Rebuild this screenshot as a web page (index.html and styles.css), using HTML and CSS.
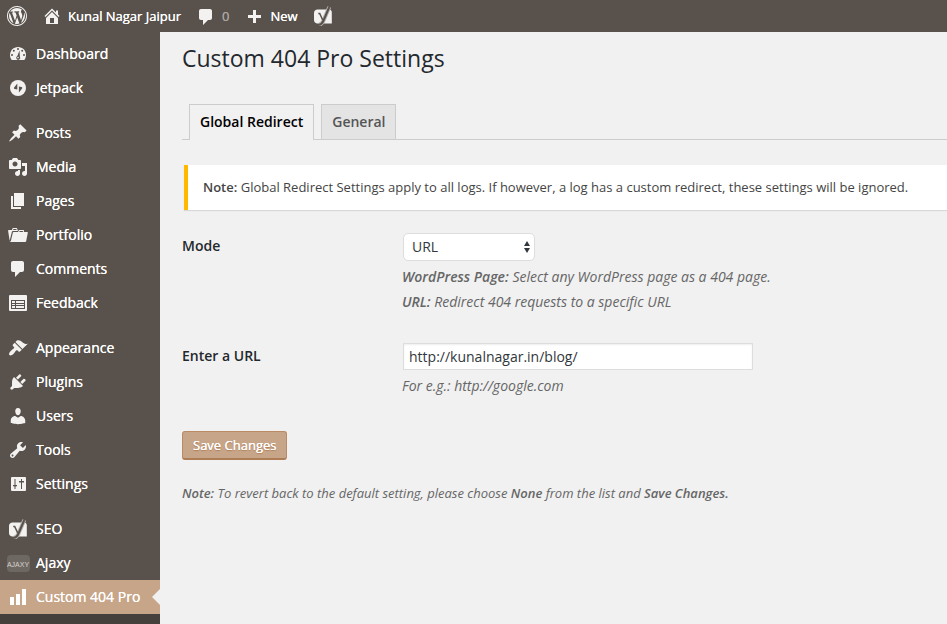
FILE: index.html
```html
<!DOCTYPE html>
<html lang="en">
<head>
<meta charset="utf-8">
<title>Custom 404 Pro Settings</title>
<link rel="stylesheet" href="styles.css">
</head>
<body>
<svg class="sprite" aria-hidden="true">
  <symbol id="comment" viewBox="0 0 20 20"><path d="M5 2h9c1.1 0 2 .9 2 2v7c0 1.1-.9 2-2 2h-2l-5 5v-5H5c-1.1 0-2-.9-2-2V4c0-1.1.9-2 2-2z"/></symbol>
  <symbol id="yoast" viewBox="0 0 20 20">
    <path d="M4.500 3.500H16c1.700 0 2.800 1.200 2.800 3v11H4.500C2.500 17.500 1 16 1 14V7C1 5 2.500 3.500 4.500 3.500z"/>
    <path class="rim" d="M16.300 1L10.300 15c-1 2.300-2 3.500-4.300 3.800" fill="none" stroke-width="4"/>
    <path class="cut" d="M16.300 1L10.300 15c-1 2.300-2 3.500-4.300 3.800" fill="none" stroke-width="2"/>
    <path class="cut" d="M5.300 7.500h1.400l3 6.500" fill="none" stroke-width="1.500"/>
  </symbol>
</svg>

<header class="adminbar">
  <a class="bar-item bar-logo" href="#" aria-label="About WordPress"><svg class="icon" viewBox="0 0 20 20"><path d="M20 10c0-5.520-4.480-10-10-10S0 4.480 0 10s4.480 10 10 10 10-4.480 10-10zM10 1.010c4.970 0 8.990 4.020 8.990 8.990s-4.020 8.990-8.990 8.990S1.010 14.970 1.010 10 5.030 1.010 10 1.010zM8.010 14.820L4.960 6.610c.490-.030 1.050-.080 1.050-.080.430-.050.380-1.010-.060-.990 0 0-1.290.100-2.130.100-.150 0-.330 0-.520-.010 1.440-2.170 3.900-3.600 6.700-3.600 2.090 0 3.990.790 5.410 2.090-.600-.080-1.450.350-1.450 1.420 0 .660.380 1.220.790 1.880.310.540.500 1.220.500 2.210 0 1.340-1.270 4.480-1.270 4.480l-2.710-7.500c.480-.030.750-.160.750-.160.430-.050.380-1.100-.050-1.080 0 0-1.300.110-2.140.110-.780 0-2.110-.110-2.110-.110-.430-.020-.480 1.060-.050 1.080l.840.080 1.120 3.040zm6.020 2.150L16.640 10s.670-1.690.390-3.810c.630 1.140.940 2.420.940 3.810 0 2.960-1.560 5.580-3.940 6.970zM2.680 6.770L6.500 17.250c-2.670-1.300-4.470-4.080-4.470-7.250 0-1.160.200-2.230.650-3.230zm7.450 4.530l2.290 6.250c-.750.270-1.570.420-2.420.420-.720 0-1.410-.110-2.060-.300z"/></svg></a>
  <a class="bar-item" href="#"><svg class="icon" viewBox="0 0 20 20" aria-hidden="true"><path d="M16 8.500l1.530 1.530-1.060 1.060L10 4.600l-6.470 6.490-1.060-1.060L10 2.500l4 4v-2h2v4zm-6-2.460l6 5.990V18H4v-5.970zM12 17v-5H8v5h4z"/></svg><span>Kunal Nagar Jaipur</span></a>
  <a class="bar-item bar-comments" href="#"><svg class="icon" aria-hidden="true"><use href="#comment"/></svg><span>0</span></a>
  <a class="bar-item bar-new" href="#"><svg class="icon" viewBox="0 0 20 20" aria-hidden="true"><path d="M17 7v3h-5v5H9v-5H4V7h5V2h3v5h5z"/></svg><span>New</span></a>
  <a class="bar-item" href="#" aria-label="SEO"><svg class="icon"><use href="#yoast"/></svg></a>
</header>

<div class="layout">
  <nav class="sidebar" aria-label="Main menu">
    <ul class="menu">
      <li><a href="#"><svg class="icon" viewBox="0 0 20 20"><path d="M3.760 16h12.480C17.340 14.640 18 12.900 18 11c0-4.420-3.580-8-8-8s-8 3.580-8 8c0 1.900.660 3.640 1.760 5z"/><g class="hole"><circle cx="10" cy="5" r="1"/><circle cx="5.800" cy="6.800" r="1"/><circle cx="14.200" cy="6.800" r="1"/><circle cx="4" cy="11" r="1"/><circle cx="16" cy="11" r="1"/><path d="M11.500 6.500l.400 6.200a2 2 0 1 1-2.600-.700z"/></g><circle cx="10" cy="13.600" r=".8"/></svg>Dashboard</a></li>
      <li><a href="#"><svg class="icon" viewBox="0 0 20 20"><circle cx="10" cy="10" r="8"/><path class="hole" d="M9.300 5.500v6l-2.600-.600c-.800-.200-1-.800-.600-1.400zM10.900 14.500v-6l2.600.600c.800.200 1 .800.600 1.400z"/></svg>Jetpack</a></li>
    </ul>
    <ul class="menu">
      <li><a href="#"><svg class="icon" viewBox="0 0 20 20"><path d="M10.440 3.020l1.820-1.820 6.360 6.350-1.830 1.820c-1.050-.680-2.480-.570-3.410.360l-.750.750c-.920.930-1.040 2.350-.350 3.410l-1.830 1.820-2.410-2.410-2.800 2.790c-.420.420-3.380 2.710-3.800 2.290s1.860-3.390 2.280-3.810l2.790-2.790L4.100 9.360l1.830-1.820c1.050.690 2.480.570 3.400-.360l.750-.750c.930-.920 1.050-2.350.360-3.410z"/></svg>Posts</a></li>
      <li><a href="#"><svg class="icon" viewBox="0 0 20 20"><path d="M13 11V4c0-.550-.450-1-1-1h-1.670L9 1H5L3.670 3H2c-.550 0-1 .450-1 1v7c0 .550.450 1 1 1h10c.550 0 1-.450 1-1zM7 4.500c1.380 0 2.500 1.120 2.500 2.500S8.380 9.500 7 9.500 4.500 8.380 4.500 7 5.620 4.500 7 4.500zM14 6h5v10.500c0 1.380-1.120 2.500-2.500 2.500S14 17.880 14 16.500s1.120-2.500 2.500-2.500c.170 0 .340.020.500.050V9h-3V6zm-4 8.050V13h2v3.500c0 1.380-1.120 2.500-2.500 2.500S7 17.880 7 16.500 8.120 14 9.500 14c.170 0 .340.020.500.050z"/></svg>Media</a></li>
      <li><a href="#"><svg class="icon" viewBox="0 0 20 20"><path d="M6 15V2h10v13H6zm-1 1h8v2H3V5h2v11z"/></svg>Pages</a></li>
      <li><a href="#"><svg class="icon" viewBox="0 0 20 20"><path d="M4 5H.780c-.370 0-.740.320-.690.840l1.560 9.990S3.500 8.470 3.860 6.700c.110-.530.610-.700.980-.700H10s-.700-2.080-.770-2.310C9.110 3.250 8.890 3 8.450 3H5.140c-.360 0-.700.230-.800.640C4.250 4.040 4 5 4 5zm4.880 0h-4s.420-1 .870-1h2.130c.480 0 1 1 1 1zM2.670 16.250c-.310.470-.760.750-1.260.750h15.730c.540 0 .920-.310 1.030-.830.440-2.190 1.680-8.440 1.680-8.440.070-.500-.300-.730-.620-.730H16V5.530c0-.160-.260-.530-.660-.530h-3.760c-.520 0-.870.580-.870.580L10 7H5.590c-.320 0-.630.190-.690.500 0 0-1.590 6.700-1.720 7.330-.070.370-.220.990-.510 1.420zM15.380 7H11s.580-1 1.130-1h2.290c.710 0 .960 1 .960 1z"/></svg>Portfolio</a></li>
      <li><a href="#"><svg class="icon"><use href="#comment"/></svg>Comments</a></li>
      <li><a href="#"><svg class="icon" viewBox="0 0 20 20"><rect x="1" y="2" width="18" height="16" rx="1"/><path class="hole" d="M3 7h14v9H3z"/><path d="M4 8h3v2H4zM8 8h8v2H8zM4 11h3v1H4zM8 11h8v1H8zM4 13h3v2H4zM8 13h8v2H8z"/></svg>Feedback</a></li>
    </ul>
    <ul class="menu">
      <li><a href="#"><svg class="icon" viewBox="0 0 20 20"><path d="M14.480 11.060L7.410 3.990l1.500-1.500c.500-.560 2.300-.470 3.510.320 1.210.800 1.430 1.280 2.910 2.100 1.180.640 2.450 1.260 4.450.850zm-.710.710L6.700 4.700 4.930 6.470c-.390.390-.390 1.020 0 1.410l1.060 1.060c.390.390.390 1.030 0 1.420-.600.600-1.430 1.110-2.210 1.690-.350.260-.700.530-1.010.840C1.430 14.230.400 16.080 1.400 17.070c.990 1 2.840-.030 4.180-1.360.310-.310.580-.660.850-1.020.570-.780 1.080-1.610 1.690-2.210.390-.390 1.020-.390 1.410 0l1.060 1.060c.390.390 1.020.390 1.410 0z"/></svg>Appearance</a></li>
      <li><a href="#"><svg class="icon" viewBox="0 0 20 20"><path d="M13.110 4.360L9.870 7.600 8 5.730l3.240-3.240c.350-.340 1.050-.200 1.560.320.520.510.660 1.210.310 1.550zm-8 1.770l.910-1.120 9.010 9.010-1.190.840c-.710.710-2.630 1.160-3.820 1.160H6.140L4.900 17.260c-.590.590-1.540.590-2.120 0-.590-.580-.590-1.530 0-2.120l1.240-1.240v-3.880c0-1.130.400-3.190 1.090-3.890zm7.260 3.970l3.240-3.240c.340-.350 1.040-.210 1.550.310.520.510.660 1.210.310 1.550l-3.240 3.250z"/></svg>Plugins</a></li>
      <li><a href="#"><svg class="icon" viewBox="0 0 20 20"><path d="M10 9.250c-2.270 0-2.730-3.440-2.730-3.440C7 4.020 7.820 2 9.970 2c2.160 0 2.980 2.020 2.710 3.810 0 0-.410 3.440-2.680 3.440zm0 2.570L12.720 10c2.390 0 4.520 2.330 4.520 4.530v2.490s-3.650 1.130-7.240 1.130c-3.650 0-7.240-1.130-7.240-1.130v-2.490c0-2.250 1.940-4.480 4.470-4.480z"/></svg>Users</a></li>
      <li><a href="#"><svg class="icon" viewBox="0 0 20 20"><path d="M16.680 9.770c-1.340 1.340-3.300 1.670-4.950.990l-5.410 6.520c-.990.990-2.590.990-3.580 0s-.990-2.590 0-3.570l6.520-5.420c-.680-1.650-.350-3.610.990-4.950 1.280-1.280 3.120-1.620 4.720-1.060l-2.890 2.890 2.820 2.820 2.860-2.870c.530 1.580.180 3.390-1.080 4.650zM3.810 16.210c.400.390 1.040.390 1.430 0 .400-.400.400-1.040 0-1.430-.390-.400-1.030-.400-1.430 0-.390.390-.390 1.030 0 1.430z"/></svg>Tools</a></li>
      <li><a href="#"><svg class="icon" viewBox="0 0 20 20"><rect x="3" y="3" width="15" height="14" rx="1"/><path class="hole" d="M6.500 5h1v6H9v1H7.500v3h-1v-3H5v-1h1.500zM13 5h1v2h2v1.500h-2V15h-1V8.500h-2V7h2zM5.500 11h3v1.500h-3z"/></svg>Settings</a></li>
    </ul>
    <ul class="menu">
      <li><a href="#"><svg class="icon"><use href="#yoast"/></svg>SEO</a></li>
      <li><a href="#"><svg class="icon ajaxy" viewBox="0 0 20 20" aria-hidden="true"><rect x="-1" y="2" width="23" height="17" rx="4"/><text x="10" y="14">AJAXY</text></svg>Ajaxy</a></li>
      <li class="current"><a href="#" aria-current="page"><svg class="icon" viewBox="0 0 20 20"><path d="M18 18V2h-4v16h4zm-6 0V7H8v11h4zm-6 0v-8H2v8h4z"/></svg>Custom 404 Pro</a></li>
    </ul>
    <div class="submenu"></div>
  </nav>

  <main class="content">
    <h1>Custom 404 Pro Settings</h1>
    <nav class="tabs" aria-label="Settings sections">
      <a class="tab active" href="#">Global Redirect</a>
      <a class="tab" href="#">General</a>
    </nav>
    <p class="notice"><strong>Note:</strong> Global Redirect Settings apply to all logs. If however, a log has a custom redirect, these settings will be ignored.</p>
    <form>
      <div class="row">
        <label for="mode">Mode</label>
        <div class="field">
          <div class="select">
            <select id="mode"><option>URL</option><option>WordPress Page</option><option>None</option></select>
            <svg viewBox="0 0 6 12" aria-hidden="true"><path d="M3 0l3 5H0zM3 12l3-5H0z"/></svg>
          </div>
          <p class="hint"><strong>WordPress Page:</strong> Select any WordPress page as a 404 page.<br><strong>URL:</strong> Redirect 404 requests to a specific URL</p>
        </div>
      </div>
      <div class="row">
        <label for="url">Enter a URL</label>
        <div class="field">
          <input id="url" type="text" value="http://kunalnagar.in/blog/">
          <p class="hint">For e.g.: http://google.com</p>
        </div>
      </div>
      <button class="save" type="submit">Save Changes</button>
    </form>
    <p class="footnote"><strong>Note:</strong> To revert back to the default setting, please choose <strong>None</strong> from the list and <strong>Save Changes.</strong></p>
  </main>
</div>
</body>
</html>
```
FILE: styles.css
```css
* { box-sizing: border-box; }

body {
  margin: 0;
  min-height: 100vh;
  display: flex;
  flex-direction: column;
  background: #f1f1f1;
  color: #444;
  font: 13px/18px "Open Sans", sans-serif;
}

a { color: inherit; text-decoration: none; }
strong { font-weight: 600; }
.sprite { position: absolute; width: 0; height: 0; }

.icon {
  width: 20px;
  height: 20px;
  flex: none;
  fill: #f3f2f1;
  overflow: visible;
}
.hole { fill: #59524c; }
.cut { stroke: #59524c; }
.rim { stroke: #b5b1ae; }

.adminbar {
  display: flex;
  height: 32px;
  padding: 0 7px;
  gap: 15px;
  background: #59524c;
  color: #fff;
  text-shadow: 0 0 currentColor;
}
.bar-item { display: flex; align-items: center; gap: 6px; }
.bar-comments { color: #a9a5a2; }
.bar-comments .icon { margin-top: 2px; }
.bar-new .icon { margin-top: 3px; }

.layout { flex: 1; display: flex; }

.sidebar {
  width: 160px;
  flex: none;
  display: flex;
  flex-direction: column;
  padding-top: 5px;
  background: #59524c;
  color: #fff;
  font-size: 14px;
  text-shadow: 0 0 currentColor;
}
.menu { list-style: none; margin: 0; padding: 0; }
.menu + .menu { margin-top: 11px; }
.menu a {
  display: flex;
  align-items: center;
  gap: 8px;
  height: 34px;
  padding: 0 8px;
}
.current { position: relative; background: #c7a589; }
.current .icon { fill: #fff; }
.current::after {
  content: "";
  position: absolute;
  right: 0;
  top: 9px;
  border: 8px solid transparent;
  border-left: 0;
  border-right-color: #f1f1f1;
}
.submenu { flex: 1; min-height: 10px; background: #46403c; }

.ajaxy rect { fill: #6e6863; }
.ajaxy text {
  fill: #d5d2cf;
  font: 7px "Liberation Sans Narrow", "Liberation Sans", sans-serif;
  text-anchor: middle;
  text-shadow: none;
}

.content { flex: 1; min-width: 0; padding: 11px 0 0 22px; }

h1 {
  margin: 0;
  color: #23282d;
  font-size: 23px;
  font-weight: 400;
  line-height: 30px;
}

.tabs {
  display: flex;
  gap: 7px;
  margin-top: 31px;
  padding-left: 7px;
  border-bottom: 1px solid #ccc;
}
.tab {
  padding: 5px 10px;
  border: 1px solid #ccc;
  border-bottom: 0;
  background: #e4e4e4;
  color: #555;
  font-size: 14px;
  font-weight: 600;
  line-height: 24px;
}
.tab.active {
  margin-bottom: -1px;
  background: #f1f1f1;
  color: #000;
}

.notice {
  margin: 25px 0 0 2px;
  padding: 13px 15px 14px;
  border-left: 4px solid #ffba00;
  background: #fff;
  box-shadow: 0 1px 1px rgba(0, 0, 0, .1);
}

form { margin-top: 23px; }
.row { display: flex; margin-bottom: 29px; }
.row label {
  width: 220px;
  flex: none;
  padding-top: 4px;
  color: #23282d;
  font-size: 14px;
  font-weight: 600;
}
.field { flex: 1; min-width: 0; }

.select { position: relative; width: 132px; margin-left: 1px; }
.select svg {
  position: absolute;
  right: 5px;
  top: 8px;
  width: 6px;
  height: 12px;
  fill: #32373c;
  pointer-events: none;
}
select, input {
  display: block;
  width: 100%;
  height: 28px;
  border: 1px solid #ddd;
  background: #fff;
  color: #32373c;
  font: 14px/18px "Open Sans", sans-serif;
}
select { appearance: none; padding: 0 8px; border-radius: 5px; }
input {
  max-width: 350px;
  height: 27px;
  margin-left: 1px;
  padding: 0 5px;
  box-shadow: inset 0 1px 2px rgba(0, 0, 0, .07);
}

.hint {
  margin: 3px 0 0;
  color: #666;
  font-size: 14px;
  font-style: italic;
  line-height: 25px;
}

.save {
  display: block;
  height: 29px;
  margin-top: 33px;
  padding: 0 10px;
  border: 1px solid #ba8a64;
  border-bottom: 2px solid #ae7d55;
  border-radius: 3px;
  background: #c7a589;
  color: #fff;
  font: 13px/18px "Open Sans", sans-serif;
  text-shadow: 0 0 #fff, 0 1px 1px #ae7d55;
}

.footnote { margin: 24px 0 0; color: #666; font-style: italic; }
```
